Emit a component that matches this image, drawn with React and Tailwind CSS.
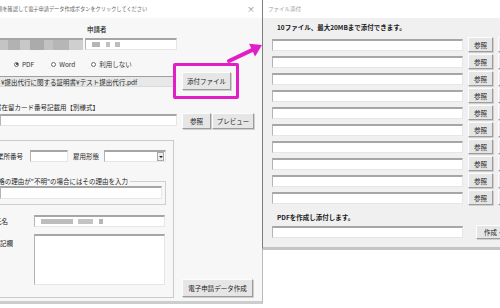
import React from 'react'

const FONT = "font-['Noto_Sans_CJK_JP','Noto_Sans',sans-serif]"

// sunken win32 style text box
const BOX = 'shrink-0 bg-white border-t-2 border-l border-r border-b border-t-[#a6a6a6] border-l-[#b4b4b4] border-r-[#e6e6e6] border-b-[#e6e6e6]'
const BTN = 'shrink-0 flex items-center justify-center bg-[#e6e6e6] border border-t-[#fdfdfd] border-l-[#fdfdfd] border-r-[#9c9c9c] border-b-[#9c9c9c] shadow-[1px_1px_0_#cfcfcf] text-[6.5px] leading-[8px] text-[#222] whitespace-nowrap overflow-hidden'

// label whose left part is cut by the screen edge
function Clip({ w, children, className = '' }) {
  return (
    <div className={`flex justify-end overflow-hidden whitespace-nowrap shrink-0 ${className}`} style={{ width: w }}>
      <span className="shrink-0">{children}</span>
    </div>
  )
}

function Radio({ on, label, className = '' }) {
  return (
    <div className={`flex items-center gap-[3px] ${className}`}>
      <div className="w-[5px] h-[5px] rounded-full border border-[#6a6a6a] bg-white flex items-center justify-center">
        {on && <div className="w-[2px] h-[2px] rounded-full bg-[#222]" />}
      </div>
      <span>{label}</span>
    </div>
  )
}

function FileRow() {
  return (
    <div className="flex items-center h-[17px]">
      <div className={`ml-[9px] w-[191px] h-[12px] ${BOX}`} />
      <div className={`ml-[5px] w-[25px] h-[15px] ${BTN}`}>参照</div>
      <div className={`ml-[5px] w-[25px] h-[15px] ${BTN}`}>削除</div>
    </div>
  )
}

export default function App() {
  return (
    <div className={`relative w-[500px] h-[308px] overflow-hidden bg-white ${FONT} text-[6.5px] leading-[8px] text-[#1e1e1e]`}>
      {/* main form window */}
      <div className="absolute left-0 top-0 w-[263px] h-[304px] bg-[#f7f7f7] border-r border-r-[#b9b9b9] border-b-[3px] border-b-[#cdcdcd] flex flex-col">
        <div className="h-[18px] bg-white flex items-center justify-between pr-[7px] text-[5.2px] text-[#666]">
          <span className="whitespace-nowrap -ml-[8px]">書類を確認して電子申請データ作成ボタンをクリックしてください</span>
          <span className="text-[8px] text-[#888] leading-none">×</span>
        </div>

        <div className="h-[20px] pl-[87px] pt-[7px] font-medium">申請者</div>

        <div className="flex h-[12px]">
          <div className="shrink-0 w-[83px] h-[12px] border-t-2 border-t-[#a6a6a6] bg-[#d4d4d4] flex overflow-hidden blur-[0.6px]">
            <div className="w-[8px] bg-[#c4c4c4]" />
            <div className="w-[12px] bg-[#b2b2b2]" />
            <div className="w-[10px] bg-[#c8c8c8]" />
            <div className="w-[14px] bg-[#ababab]" />
            <div className="w-[9px] bg-[#c2c2c2]" />
            <div className="w-[16px] bg-[#b6b6b6]" />
            <div className="w-[14px] bg-[#cfcfcf]" />
          </div>
          <div className={`ml-[2px] w-[92px] h-[12px] ${BOX} bg-[#f2f2f2] flex items-center`}>
            <div className="ml-[6px] w-[8px] h-[5px] bg-[#b5b5b5] blur-[0.5px]" />
            <div className="ml-[6px] w-[4px] h-[5px] bg-[#c0c0c0] blur-[0.5px]" />
            <div className="ml-[5px] w-[5px] h-[5px] bg-[#bdbdbd] blur-[0.5px]" />
          </div>
        </div>

        <div className="mt-[9px] h-[10px] flex items-center text-[#333]">
          <Radio on label="PDF" className="ml-[14px]" />
          <Radio label="Word" className="ml-[17px]" />
          <Radio label="利用しない" className="ml-[16px]" />
        </div>

        <div className="mt-[3px] h-[18px] flex items-start">
          <div className="shrink-0 mt-[4px] w-[173px] h-[11px] bg-[#e8e8e8] border-t border-t-[#9f9f9f] border-b border-b-[#dadada] flex items-center whitespace-nowrap overflow-hidden">
            <span className="ml-[1px]">¥提出代行に関する証明書¥テスト提出代行.pdf</span>
          </div>
          <div className={`ml-[9px] w-[49px] h-[18px] ${BTN}`}>添付ファイル</div>
        </div>

        <div className="mt-[13px] h-[8px] flex">
          <Clip w={99}>証明書在留カード番号記載用【別様式】</Clip>
        </div>

        <div className="mt-[2px] flex items-start h-[16px]">
          <div className={`mt-[1px] w-[177px] h-[12px] ${BOX}`} />
          <div className={`ml-[5px] w-[29px] h-[16px] ${BTN}`}>参照</div>
          <div className={`ml-[1px] w-[42px] h-[16px] ${BTN}`}>プレビュー</div>
        </div>

        <div className="mt-[11px] flex items-end">
          <div className="shrink-0 w-[174px] h-[158px] border border-l-0 border-[#cbcbcb] flex flex-col">
            <div className="mt-[9px] h-[12px] flex items-center">
              <Clip w={23}>事業所番号</Clip>
              <div className={`ml-[7px] w-[38px] h-[12px] ${BOX}`} />
              <span className="ml-[5px] shrink-0 whitespace-nowrap">雇用形態</span>
              <div className={`ml-[5px] w-[62px] h-[12px] ${BOX} flex justify-end items-center pr-[1px]`}>
                <div className="w-[7px] h-[9px] bg-[#ececec] border border-[#a8a8a8] flex items-center justify-center">
                  <div className="w-0 h-0 border-l-[2px] border-r-[2px] border-t-[2px] border-l-transparent border-r-transparent border-t-[#222]" />
                </div>
              </div>
            </div>

            <div className="mt-[15px] w-[166px] flex flex-col">
              <div className="h-[8px] -mb-[4px] relative z-10 flex">
                <div className="bg-[#f7f7f7] pr-[2px] flex">
                  <Clip w={128}>在留資格の理由が"不明"の場合にはその理由を入力</Clip>
                </div>
              </div>
              <div className="h-[24px] border-t border-r border-b border-[#cfcfcf] pt-[4px]">
                <div className={`w-[162px] h-[13px] ${BOX}`} />
              </div>
            </div>

            <div className="mt-[10px] h-[12px] flex items-center">
              <div className="shrink-0 w-[34px] flex">
                <Clip w={8}>氏名</Clip>
              </div>
              <div className={`w-[131px] h-[12px] ${BOX} flex items-center`}>
                <div className="ml-[6px] w-[32px] h-[5px] bg-[#bdbdbd] blur-[0.6px]" />
                <div className="ml-[5px] w-[15px] h-[5px] bg-[#c4c4c4] blur-[0.6px]" />
                <div className="ml-[6px] w-[4px] h-[5px] bg-[#b5b5b5] blur-[0.5px]" />
              </div>
            </div>

            <div className="mt-[7px] flex items-start">
              <div className="shrink-0 w-[34px] flex mt-[5px]">
                <Clip w={13}>特記欄</Clip>
              </div>
              <div className={`w-[131px] h-[51px] ${BOX}`} />
            </div>
          </div>
          <div className={`ml-[8px] mb-[1px] w-[71px] h-[18px] ${BTN}`}>電子申請データ作成</div>
        </div>
      </div>

      {/* attachment dialog */}
      <div className="absolute left-[262px] top-0 w-[270px] h-[250px] bg-[#f0f0f0] border-l border-l-[#7d7d7d] border-b-[3px] border-b-[#c4c4c4] flex flex-col">
        <div className="h-[18px] bg-white flex items-center pl-[5px] text-[5.5px] text-[#9a9a9a]">ファイル添付</div>
        <div className="mt-[5px] h-[9px] pl-[14px] font-semibold text-[#1a1a1a] whitespace-nowrap">10ファイル、最大20MBまで添付できます。</div>
        <div className="mt-[4px] flex flex-col">
          {Array.from({ length: 10 }).map((_, i) => <FileRow key={i} />)}
        </div>
        <div className="mt-[7px] h-[8px] pl-[14px] font-semibold text-[#1a1a1a] whitespace-nowrap">PDFを作成し添付します。</div>
        <div className="mt-[4px] h-[14px] flex items-center">
          <div className={`ml-[9px] w-[191px] h-[12px] ${BOX}`} />
          <div className={`ml-[13px] w-[60px] h-[14px] ${BTN} justify-start pl-[7px]`}>作成・添付</div>
        </div>
      </div>

      {/* annotation: highlight and arrow */}
      <div className="absolute left-[173px] top-[63px] w-[66px] h-[36px] border-[3px] border-[#e21ec7] rounded-[2px]" />
      <svg className="absolute left-[222px] top-[36px]" width="45" height="30" viewBox="0 0 45 30">
        <line x1="7" y1="25" x2="31" y2="13.6" stroke="#e21ec7" strokeWidth="4" strokeLinecap="round" />
        <polygon points="40,9 33.1,20.4 27.1,7.8" fill="#e21ec7" />
      </svg>
    </div>
  )
}
